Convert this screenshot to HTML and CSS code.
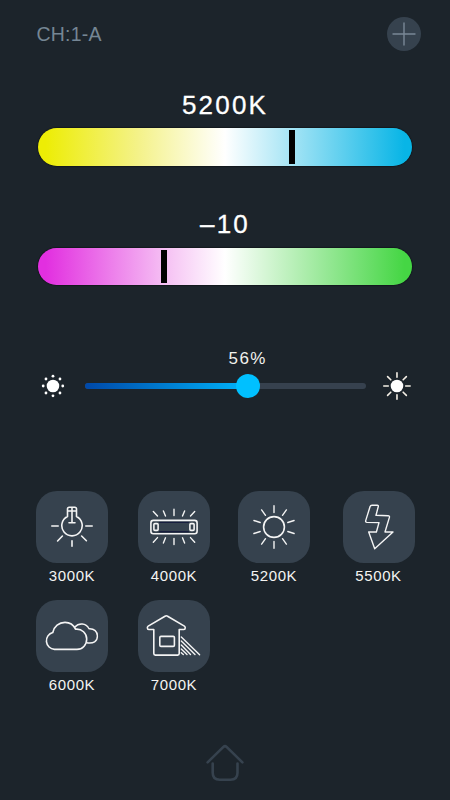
FILE: index.html
```html
<!DOCTYPE html>
<html lang="en">
<head>
    <meta charset="UTF-8">
    <meta name="viewport" content="width=device-width, initial-scale=1.0">
    <title>CH:1-A</title>
    <link rel="stylesheet" href="styles.css">
</head>
<body>

<header class="header">
    <span class="channel">CH:1-A</span>
    <button class="add-button" aria-label="Add">
        <svg width="34" height="34" viewBox="0 0 34 34"><path d="M17 6v22M6 17h22"/></svg>
    </button>
</header>

<main>
    <section class="control">
        <div class="value">5200K</div>
        <div class="bar bar-temp"><div class="marker" style="left: 67.1%"></div></div>
    </section>

    <section class="control control-tint">
        <div class="value">–10</div>
        <div class="bar bar-tint"><div class="marker" style="left: 32.8%"></div></div>
    </section>

    <section class="brightness">
        <svg class="sun" width="34" height="34" viewBox="-17 -17 34 34">
            <circle r="6.3"/>
            <circle cx="0" cy="-9.8" r="1.4"/>
            <circle cx="7" cy="-7" r="1.4"/>
            <circle cx="9.8" cy="0" r="1.4"/>
            <circle cx="7" cy="7" r="1.4"/>
            <circle cx="0" cy="9.8" r="1.4"/>
            <circle cx="-7" cy="7" r="1.4"/>
            <circle cx="-9.8" cy="0" r="1.4"/>
            <circle cx="-7" cy="-7" r="1.4"/>
        </svg>
        <div class="track">
            <div class="fill" style="width: 58%"></div>
            <div class="knob" style="left: 58%"></div>
            <div class="percent" style="left: 58%">56%</div>
        </div>
        <svg class="sun" width="34" height="34" viewBox="-17 -17 34 34">
            <circle r="6.3"/>
            <path d="M0-8.7V-13.2M0 8.7V13.2M-8.7 0H-13.2M8.7 0H13.2M6.2-6.2L9.4-9.4M6.2 6.2L9.4 9.4M-6.2 6.2L-9.4 9.4M-6.2-6.2L-9.4-9.4"/>
        </svg>
    </section>

    <section class="presets">
        <div class="preset">
            <!-- bulb -->
            <svg class="tile" viewBox="0 0 72 72">
                <path d="M31.5 25.5V18Q31.5 16.3 33.2 16.3H38.8Q40.5 16.3 40.5 18V25.5A10.2 10.2 0 1 1 31.5 25.5ZM31.5 20H40.5M36 16.3V31.8M33 31.8H39"/>
                <path d="M15.8 35H22.2M49.8 35H56.2M36 49.7V55.2M26.4 45L21.6 50M45.6 45L50.4 49.7"/>
            </svg>
            <div class="label">3000K</div>
        </div>
        <div class="preset">
            <!-- tube -->
            <svg class="tile" viewBox="0 0 72 72">
                <path class="shade" d="M21.5 31.3H50.5M21.5 40.7H50.5"/>
                <rect x="12.9" y="29.4" width="46.2" height="13.4" rx="2.5"/>
                <rect x="15.9" y="32.6" width="4.2" height="6.8" rx="1"/>
                <rect x="51.9" y="32.6" width="4.2" height="6.8" rx="1"/>
                <path class="thin" d="M15.3 20.6L19.5 25.1M25.4 20L27.5 25.1M36 18.2V24.5M46.6 20L44.5 25.1M56.7 20.6L52.5 25.1M19.5 46.6L15.3 51.3M27.5 46.8L25.4 52M36 47.5V53.5M44.5 46.8L46.6 52M52.5 46.6L56.7 51.3"/>
            </svg>
            <div class="label">4000K</div>
        </div>
        <div class="preset">
            <!-- sun -->
            <svg class="tile" viewBox="0 0 72 72">
                <circle cx="36" cy="36" r="10.4"/>
                <path class="thin" d="M36 14.8V21.5M36 50.5V57.2M23.6 18.9L27.5 24.3M48.4 18.9L44.5 24.3M23.6 53.1L27.5 47.7M48.4 53.1L44.5 47.7M15.9 29.5L22.2 31.5M56.1 29.5L49.8 31.5M15.9 42.5L22.2 40.5M56.1 42.5L49.8 40.5"/>
            </svg>
            <div class="label">5200K</div>
        </div>
        <div class="preset">
            <!-- flash -->
            <svg class="tile" viewBox="0 0 72 72">
                <path class="thin" d="M29 14.3H34.3Q35.7 14.3 35.3 15.5L33 24.3L45 24.7Q46.8 24.8 46.4 26.4L42 41H50L31.7 57.7L25.7 41H33.4L36 31.6L24 31.4Q22.3 31.3 22.7 29.6L27 15.8Q27.5 14.3 29 14.3Z"/>
            </svg>
            <div class="label">5500K</div>
        </div>
        <div class="preset">
            <!-- clouds -->
            <svg class="tile" viewBox="0 0 72 72">
                <path d="M18.5 49.4A8.6 8.6 0 0 1 16.8 32.5C18 26.5 23 22.4 29 22.4C33.8 22.4 37.5 25 39.5 29.2C46 28.5 50.7 33.5 50.7 39C50.7 45 46.5 49.4 41 49.4Z"/>
                <path class="thin" d="M38.7 27.2C42.5 22.8 50 22.6 53 28.7C58.3 28.4 61.4 31.7 61.4 35.9C61.4 41.5 57.5 43.8 50.7 42.8"/>
            </svg>
            <div class="label">6000K</div>
        </div>
        <div class="preset">
            <!-- shade -->
            <svg class="tile" viewBox="0 0 72 72">
                <path d="M15.8 29.5H10.7Q9.4 29.5 9.4 28V27.5Q9.4 26.6 10.2 26.1L27 16.2Q28.3 15.4 29.6 16.2L46.4 26.1Q47.2 26.6 47.2 27.5V28Q47.2 29.5 45.9 29.5H41.2V53.5Q41.2 55.1 39.6 55.1H17.4Q15.8 55.1 15.8 53.5Z"/>
                <rect x="21.8" y="36.4" width="14.6" height="10" rx="1.2"/>
                <path class="thin" d="M43.3 37L61.6 54.8M43.3 41L57 54.6M43.3 45L52.5 54.6M43.3 49L49 54.6M43.3 52.7L45.3 54.6"/>
            </svg>
            <div class="label">7000K</div>
        </div>
    </section>
</main>

<footer class="footer">
    <svg class="home" width="42" height="42" viewBox="0 0 42 42">
        <path d="M3.6 20.4L19.4 4.9Q21 3.5 22.6 4.9L38.4 20.4"/>
        <path d="M8.7 21.6V30.8Q8.7 37.8 15.7 37.8H26.5Q33.5 37.8 33.5 30.8V21.6"/>
    </svg>
</footer>

</body>
</html>
```
FILE: styles.css
```css
* {
    box-sizing: border-box;
}
body {
    font-family: "Liberation Sans", Arial, sans-serif;
    margin: 0;
    padding: 17px 0 0;
    height: 800px;
    overflow: hidden;
    background-color: #1c242b;
    color: #fff;
}
svg {
    display: block;
    fill: none;
    stroke-linecap: round;
    stroke-linejoin: round;
}
.header {
    display: flex;
    justify-content: space-between;
    align-items: center;
    height: 34px;
    padding: 0 29.5px 0 36.5px;
}
.channel {
    font-size: 19.5px;
    letter-spacing: 0.2px;
    color: #758694;
}
.add-button {
    width: 34px;
    height: 34px;
    padding: 0;
    border: none;
    border-radius: 50%;
    background-color: #36424e;
}
.add-button svg {
    stroke: #798896;
    stroke-width: 1.4;
}
.control {
    margin: 39px 38px 0;
}
.control-tint {
    margin-top: 43px;
}
.control-tint .bar {
    margin-top: 9px;
}
.value {
    height: 30px;
    line-height: 30px;
    font-size: 26px;
    letter-spacing: 2.2px;
    text-align: center;
    -webkit-text-stroke: 0.3px #fff;
}
.bar {
    position: relative;
    height: 37.5px;
    margin-top: 8px;
    border-radius: 19px;
    box-shadow: 0 0 1px 0.5px #0b0f13;
}
.bar-temp {
    background: linear-gradient(to right, #eded05 2%, #f4f28a 27%, #fff 50%, #a4e4f5 68%, #08b5e6 98%);
}
.bar-tint {
    height: 37px;
    background: linear-gradient(to right, #e22fe0 2%, #f6c4f4 35%, #fff 50%, #45d644 98%);
}
.marker {
    position: absolute;
    top: 2px;
    bottom: 1.5px;
    width: 6px;
    background-color: #000;
}
.brightness {
    display: flex;
    align-items: center;
    height: 34px;
    margin: 84px 36px 0;
}
.sun {
    fill: #fff;
    stroke-width: 1.6;
}
.sun path {
    stroke: #f4efe6;
}
.track {
    position: relative;
    width: 281px;
    height: 6px;
    margin: 0 14.5px 0 15px;
    border-radius: 3px;
    background-color: #36414e;
}
.fill {
    height: 6px;
    border-radius: 3px;
    background: linear-gradient(to right, #0048a8, #00b4fa);
}
.knob {
    position: absolute;
    top: 50%;
    width: 24px;
    height: 24px;
    border-radius: 50%;
    background-color: #00c0ff;
    transform: translate(-50%, -50%);
}
.percent {
    position: absolute;
    bottom: 20px;
    line-height: 20px;
    font-size: 17px;
    letter-spacing: 1.5px;
    color: #f2f2ee;
    transform: translateX(-50%);
}
.presets {
    display: grid;
    grid-template-columns: 102px 100px 104.5px 72px;
    row-gap: 14px;
    margin: 88px 0 0 36px;
}
.preset {
    width: 72px;
}
.tile {
    width: 72px;
    height: 72px;
    border-radius: 21px;
    background-color: #36424e;
    stroke: #f4f4f4;
    stroke-width: 1.6;
}
.thin {
    stroke-width: 1.4;
}
.shade {
    stroke: #10143a;
    stroke-width: 1;
}
.label {
    margin-top: 3px;
    line-height: 20px;
    font-size: 15px;
    letter-spacing: 0.6px;
    text-align: center;
    white-space: nowrap;
    color: #f4f4f2;
}
.footer {
    display: flex;
    justify-content: center;
    margin-top: 47px;
}
.home {
    stroke: #36424e;
    stroke-width: 2.6;
}
```
